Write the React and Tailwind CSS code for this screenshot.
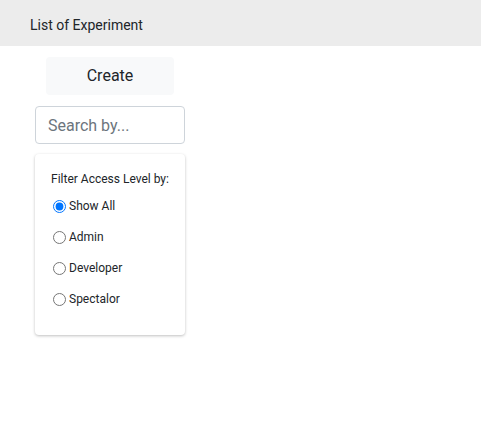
import React from "react";

export default function App() {
  const options = ["Show All", "Admin", "Developer", "Spectalor"];
  return (
    <div className="w-[481px] h-[424px] bg-white text-[#212529]" style={{ fontFamily: "Roboto, 'Liberation Sans', sans-serif" }}>
      <div className="h-[46px] bg-[#ececec] flex items-center pl-[30px] pt-[5px] text-[14px]">List of Experiment</div>
      <div className="ml-[35px] w-[150px] flex flex-col">
        <button className="mt-[11px] self-center w-[128px] h-[38px] bg-[#f8f9fa] rounded-[4px] text-[16px] text-[#212529]">Create</button>
        <input
          className="mt-[11px] h-[38px] w-[150px] border border-[#ced4da] rounded-[4px] px-3 text-[16px] placeholder:text-[#6c757d] outline-none"
          placeholder="Search by..."
        />
        <div className="mt-[10px] h-[181px] rounded-[4px] bg-white shadow-[0_1px_3px_rgba(0,0,0,0.25)] pl-[16px] pt-[17px]">
          <div className="text-[12px] leading-[16px]">Filter Access Level by:</div>
          <div className="mt-[10px] flex flex-col gap-[13px]">
            {options.map((o, i) => (
              <label key={o} className="flex items-center h-[18px] text-[12px]">
                <input type="radio" name="lvl" defaultChecked={i === 0} className="m-0 ml-[2px] mr-[3px] w-[13px] h-[13px]" />
                {o}
              </label>
            ))}
          </div>
        </div>
      </div>
    </div>
  );
}
